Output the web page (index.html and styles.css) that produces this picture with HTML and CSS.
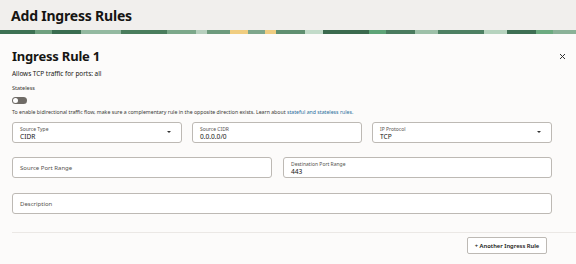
FILE: index.html
```html
<!DOCTYPE html>
<html lang="en">
<head>
    <meta charset="UTF-8">
    <meta name="viewport" content="width=device-width, initial-scale=1.0">
    <title>Add Ingress Rules</title>
    <link rel="stylesheet" href="styles.css">
</head>
<body>
    <header class="page-header">
        <h1>Add Ingress Rules</h1>
    </header>
    <div class="band"></div>

    <main class="panel">
        <div class="rule-head">
            <h2>Ingress Rule 1</h2>
            <button class="close" aria-label="Close">
                <svg width="7" height="7" viewBox="0 0 7 7"><path d="M1 1L6 6M6 1L1 6" stroke="#333" stroke-width="1"/></svg>
            </button>
        </div>
        <p class="summary">Allows TCP traffic for ports: all</p>

        <div class="stateless">
            <span class="small-label">Stateless</span>
            <span class="toggle"><span class="knob"></span></span>
            <p class="help">To enable bidirectional traffic flow, make sure a complementary rule in the opposite direction exists. Learn about <a href="#">stateful and stateless rules.</a></p>
        </div>

        <div class="row row-three">
            <div class="field select">
                <span class="field-label">Source Type</span>
                <span class="field-value">CIDR</span>
                <span class="caret"></span>
            </div>
            <div class="field">
                <span class="field-label">Source CIDR</span>
                <span class="field-value">0.0.0.0/0</span>
            </div>
            <div class="field select">
                <span class="field-label">IP Protocol</span>
                <span class="field-value">TCP</span>
                <span class="caret"></span>
            </div>
        </div>

        <div class="row row-two">
            <div class="field empty">
                <span class="placeholder">Source Port Range</span>
            </div>
            <div class="field">
                <span class="field-label">Destination Port Range</span>
                <span class="field-value">443</span>
            </div>
        </div>

        <div class="row">
            <div class="field empty">
                <span class="placeholder">Description</span>
            </div>
        </div>

        <div class="footer">
            <button class="add-rule">+ Another Ingress Rule</button>
        </div>
    </main>
</body>
</html>
```

FILE: styles.css
```css
body {
    margin: 0;
    font-family: "Noto Sans", "Open Sans", sans-serif;
    color: #161513;
    background: #fcfbfa;
}
.page-header {
    background: #f1efed;
    height: 30px;
    padding: 0 11px;
    display: flex;
    align-items: center;
}
.page-header h1 {
    margin: 0;
    font-size: 14px;
    font-weight: 700;
    letter-spacing: -0.2px;
}
.band {
    height: 4px;
    background:
        linear-gradient(90deg,
            #3d7153 0 6%, #6fa07f 6% 9%, #3a6d50 9% 14%, #93b9a0 14% 21%,
            #4a7d5d 21% 29%, #7ca88a 29% 34%, #b7d0be 34% 36%,
            #6d9a7c 36% 40%, #f0cd80 40% 43%, #7ea68b 43% 46%,
            #efcd82 46% 48%, #5f8f70 48% 53%, #c2dbc9 53% 56%,
            #3b6a4e 56% 64%, #5ea477 64% 67%, #4a7b5e 67% 72%,
            #9dc0a8 72% 76%, #4d8062 76% 84%, #b6d3be 84% 88%,
            #3e6f53 88% 93%, #6cab80 93% 96%, #8bb298 96% 100%);
}
.panel {
    padding: 13px 24px 0 12px;
}
.rule-head {
    display: flex;
    justify-content: space-between;
    align-items: center;
}
.rule-head h2 {
    margin: 0;
    font-size: 13px;
    font-weight: 700;
    letter-spacing: -0.2px;
}
.close {
    border: 0;
    background: none;
    padding: 0;
    margin-right: -14px;
    display: flex;
}
.summary {
    margin: 4px 0 0;
    font-size: 6.4px;
}
.stateless {
    margin-top: 6px;
}
.small-label {
    display: block;
    font-size: 5.5px;
    color: #3b3936;
}
.toggle {
    display: block;
    width: 15px;
    height: 7px;
    margin-top: 5px;
    border-radius: 4px;
    background: #6f6b66;
    position: relative;
}
.knob {
    position: absolute;
    left: 1px;
    top: 1px;
    width: 5px;
    height: 5px;
    border-radius: 50%;
    background: #fff;
}
.help {
    margin: 4px 0 0;
    font-size: 5.2px;
    color: #3b3936;
}
.help a {
    color: #2a6e9c;
    text-decoration: none;
}
.row {
    display: grid;
    gap: 11px;
    margin-top: 15px;
}
.row-three {
    grid-template-columns: 170px 170px 1fr;
    gap: 10px;
    margin-top: 6px;
}
.row-two {
    grid-template-columns: 260px 1fr;
    margin-top: 14px;
}
.field {
    height: 21px;
    box-sizing: border-box;
    background: #fff;
    border: 1px solid #bdb9b4;
    border-radius: 3px;
    padding: 3px 7px 0;
    position: relative;
    display: flex;
    flex-direction: column;
}
.field-label {
    font-size: 5px;
    color: #55524e;
    line-height: 6px;
}
.field-value {
    font-size: 6.6px;
    line-height: 9px;
}
.field.empty {
    justify-content: center;
    padding-top: 0;
}
.placeholder {
    font-size: 6px;
    color: #55524e;
}
.caret {
    position: absolute;
    right: 10px;
    top: 8px;
    border-left: 2px solid transparent;
    border-right: 2px solid transparent;
    border-top: 2px solid #333;
}
.footer {
    margin: 18px -24px 0 0;
    border-top: 1px solid #ebe8e5;
    display: flex;
    justify-content: flex-end;
    padding: 4px 29px 0 0;
}
.add-rule {
    font-family: inherit;
    font-size: 5.8px;
    font-weight: 600;
    color: #161513;
    background: #fff;
    border: 1px solid #bdb9b4;
    border-radius: 2px;
    height: 17px;
    width: 80px;
    padding: 0;
}
```
